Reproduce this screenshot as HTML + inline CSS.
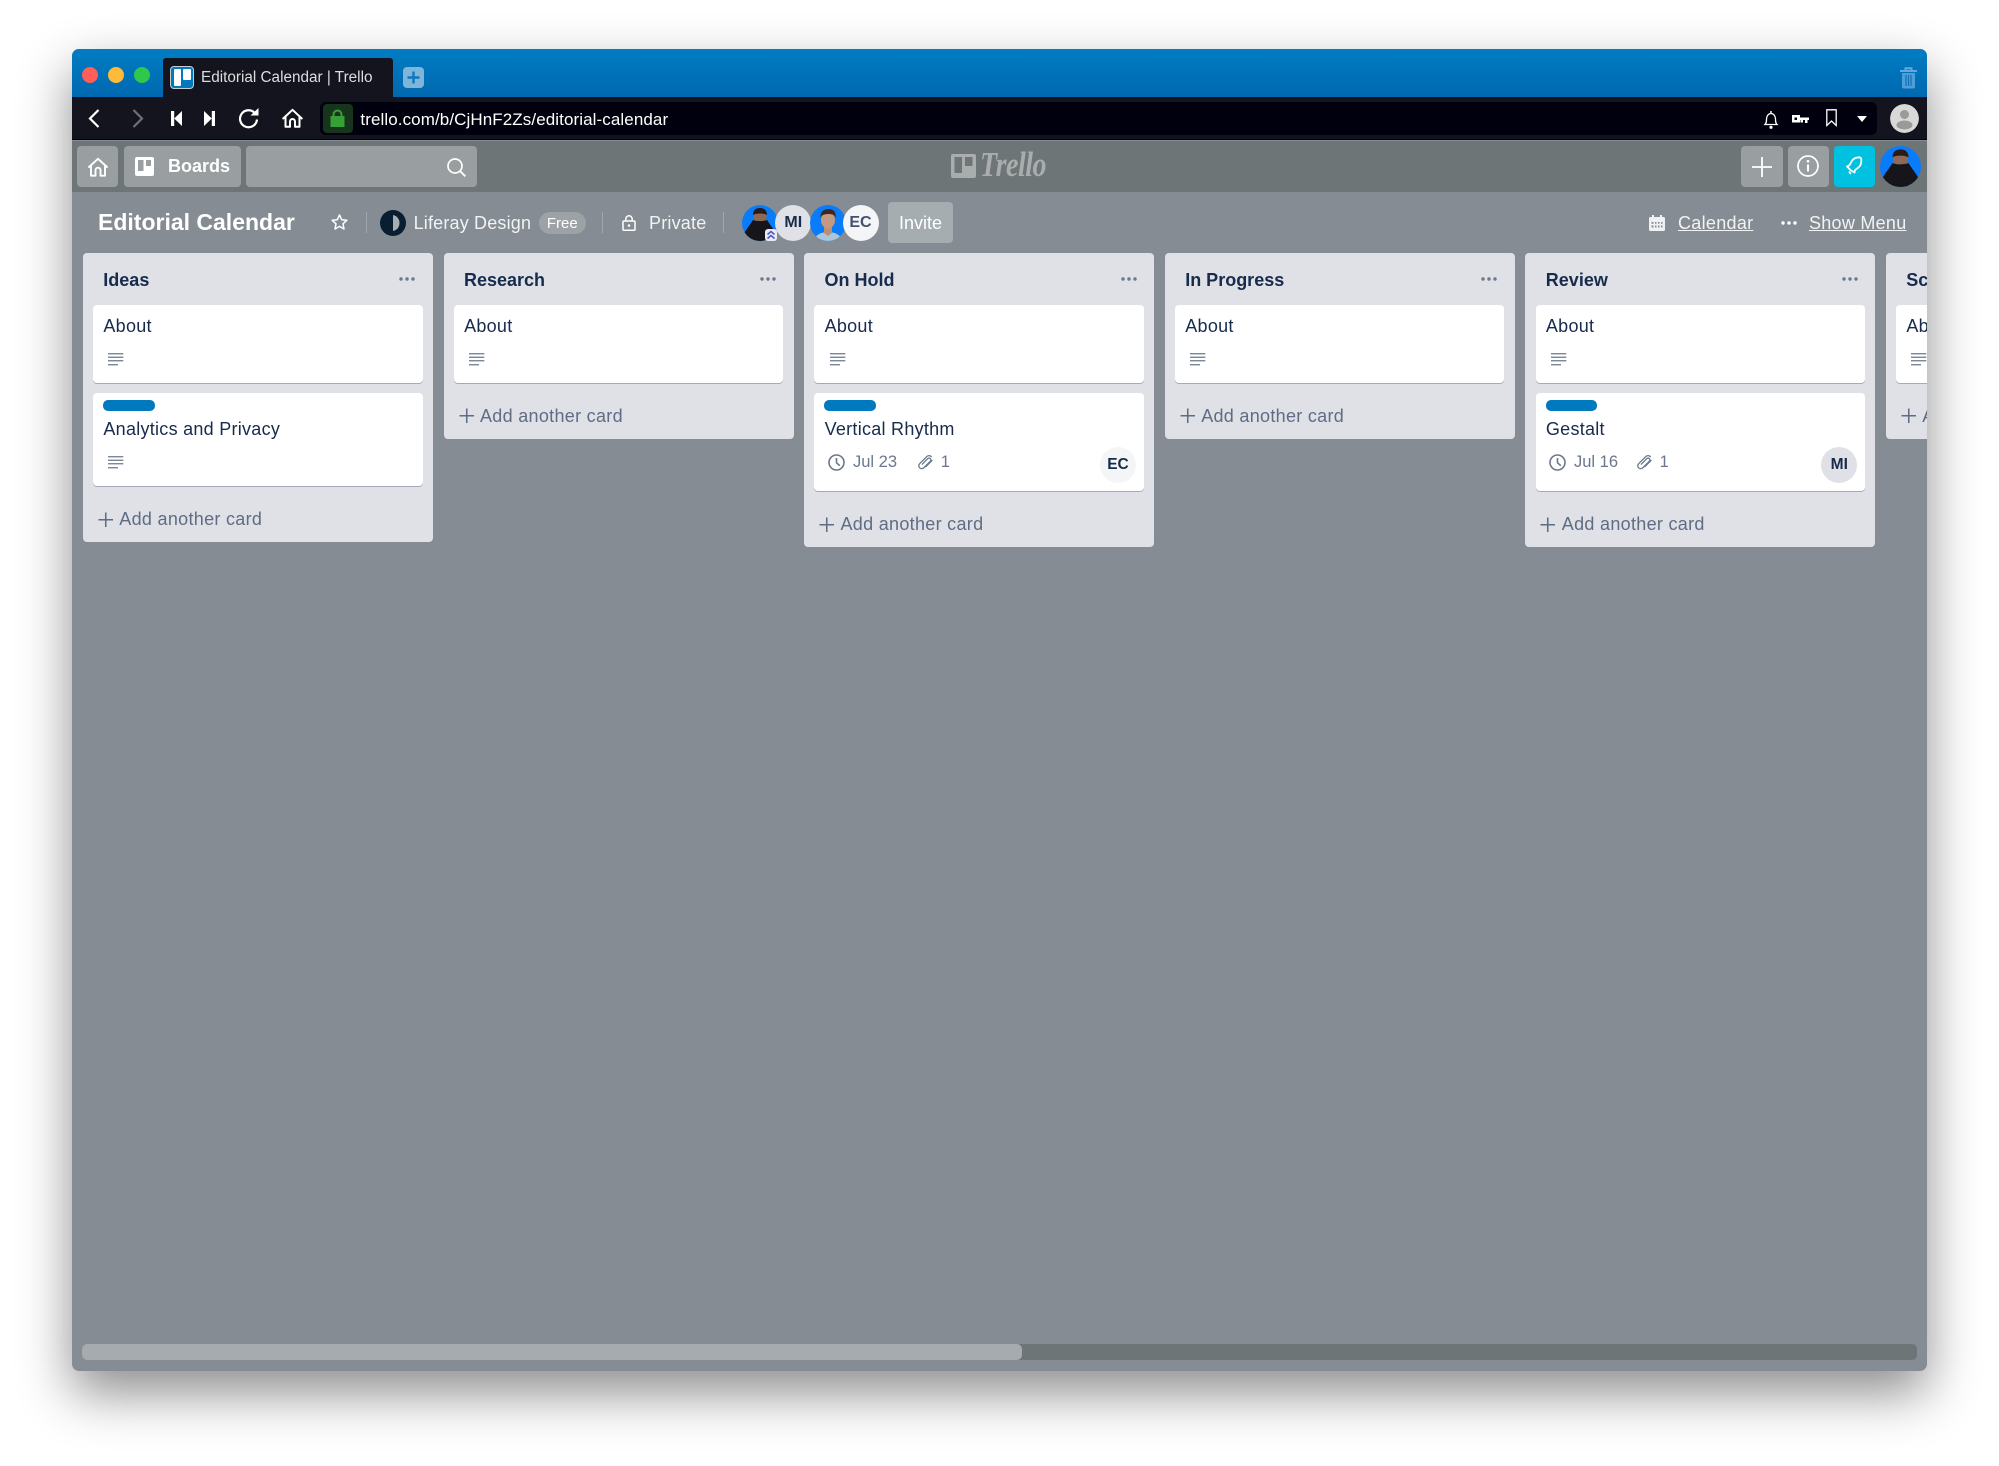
<!DOCTYPE html>
<html lang="en">
<head>
<meta charset="utf-8">
<title>Editorial Calendar | Trello</title>
<style>
*{box-sizing:border-box;margin:0;padding:0}
html,body{width:1999px;height:1466px;background:#fff;overflow:hidden;font-family:"Liberation Sans",sans-serif}
#win{position:absolute;left:72px;top:49px;width:1855px;height:1322px;border-radius:7px;box-shadow:0 22px 52px rgba(0,0,0,.45);}
#wclip{position:absolute;left:0;top:0;width:1855px;height:1322px;border-radius:7px;overflow:hidden;background:#858c93}
#in{position:absolute;left:-72px;top:-49px;width:1px;height:1px}
.a{position:absolute}
.t{position:absolute;white-space:nowrap}
.hb{position:absolute;top:146px;height:41px;border-radius:4px;background:#999fa1}
svg{position:absolute;overflow:visible;display:block}
.l{position:absolute;top:253.3px;width:350px;background:#dfe1e6;border-radius:4px}
.lt{position:absolute;left:20.5px;top:14.7px;line-height:24px;font-size:18px;font-weight:700;color:#172b4d;white-space:nowrap}
.c{position:absolute;left:10.3px;width:329.5px;background:#fff;border-radius:4px;box-shadow:0 1px 0 rgba(9,30,66,.28)}
.ct{position:absolute;left:10.3px;line-height:24px;font-size:18px;letter-spacing:.27px;color:#172b4d;white-space:nowrap}
.lb{position:absolute;left:10px;top:7.3px;width:51.7px;height:10.4px;border-radius:5px;background:#0079bf}
.add{position:absolute;left:36.5px;line-height:24px;font-size:18px;letter-spacing:.3px;color:#5e6c84;white-space:nowrap}
.m{position:absolute;font-size:16.5px;line-height:20px;color:#6b778c;white-space:nowrap}
.mav{position:absolute;top:53.7px;width:36px;height:36px;border-radius:50%;text-align:center;line-height:36px;font-size:15.5px;font-weight:700;color:#172b4d}
.av{position:absolute;top:204.7px;width:36px;height:36px;border-radius:50%;text-align:center;line-height:36px;font-size:16px;font-weight:700}
.sep{position:absolute;top:212px;width:1px;height:21px;background:rgba(255,255,255,.24)}
.bt{position:absolute;white-space:nowrap;color:#f2f3f4;font-size:18px;line-height:24px;top:210.7px}
</style>
</head>
<body>
<svg width="0" height="0" style="position:absolute">
<defs>
<symbol id="desc" viewBox="0 0 15.4 13"><g stroke="#6b778c" stroke-width="1.25" fill="none"><path d="M0 .7H15.4M0 4.2H15.4M0 7.7H15.4M0 11.8H10"/></g></symbol>
<symbol id="plus" viewBox="0 0 16 16"><path d="M8 .5V15.5M.5 8H15.5" stroke="#5e6c84" stroke-width="1.6" fill="none"/></symbol>
<symbol id="dots" viewBox="0 0 16 4"><circle cx="2" cy="2" r="1.7" fill="#6b778c"/><circle cx="8" cy="2" r="1.7" fill="#6b778c"/><circle cx="14" cy="2" r="1.7" fill="#6b778c"/></symbol>
<symbol id="clock" viewBox="0 0 17 17"><circle cx="8.5" cy="8.5" r="7.5" fill="none" stroke="#6b778c" stroke-width="1.6"/><path d="M8.5 4V8.8L11.8 11.6" fill="none" stroke="#6b778c" stroke-width="1.6"/></symbol>
<symbol id="a1" viewBox="0 0 36 36"><rect width="36" height="36" fill="#0a7cfa"/><ellipse cx="18" cy="12" rx="6.5" ry="7.5" fill="#8c6a57"/><path d="M11 10c0-5 3-7 7-7s7 2 7 7c-3-2-11-2-14 0z" fill="#2b1b16"/><path d="M0 36V32C3 26 7 21 11 15c4 1.5 10 1.5 14 0 4 6 8 11 11 17v4z" fill="#15151a"/></symbol>
<symbol id="a3" viewBox="0 0 36 36"><rect width="36" height="36" fill="#0a7cfa"/><path d="M4 36c1-6 7-9 14-9s13 3 14 9z" fill="#a9c6dc"/><path d="M14 20h8v8l-4 3-4-3z" fill="#b98f78"/><ellipse cx="18" cy="15" rx="7" ry="8.5" fill="#c39a80"/><path d="M10.5 13c-.5-6 3-9 8-9s8 3 7 9c-1-3-3-4-7-4s-7 1-8 4z" fill="#3c2a22"/></symbol>
</defs>
</svg>

<div id="win"><div id="wclip"><div id="in">

<!-- tab bar -->
<div class="a" style="left:72px;top:49px;width:1855px;height:48px;background:linear-gradient(#007dc3,#0068b0)"></div>
<div class="a" style="left:82px;top:66.7px;width:16px;height:16px;border-radius:50%;background:#ff5f5b"></div>
<div class="a" style="left:107.7px;top:66.7px;width:16px;height:16px;border-radius:50%;background:#febb3a"></div>
<div class="a" style="left:133.7px;top:66.7px;width:16px;height:16px;border-radius:50%;background:#2fc84a"></div>
<div class="a" style="left:162.5px;top:58px;width:230px;height:39px;background:#14141e;border-radius:3px 3px 0 0"></div>
<div class="a" style="left:170px;top:65.7px;width:23.5px;height:23.5px;border-radius:4px;background:#0079bf;border:1.5px solid #c6ccd2"></div>
<div class="a" style="left:173.5px;top:69px;width:7.5px;height:16.5px;background:#fff;border-radius:1px"></div>
<div class="a" style="left:183px;top:69px;width:7.5px;height:10.5px;background:#fff;border-radius:1px"></div>
<div class="t" style="left:201px;top:68px;line-height:20px;font-size:15.3px;color:#dcdde0">Editorial Calendar | Trello</div>
<div class="a" style="left:403px;top:66.7px;width:21px;height:21px;border-radius:4px;background:#80b5da"></div>
<svg style="left:403px;top:66.7px" width="21" height="21"><path d="M10.5 4.5V16.5M4.5 10.5H16.5" stroke="#0f78bd" stroke-width="2.4"/></svg>
<svg style="left:1900px;top:66.7px" width="17" height="22" viewBox="0 0 17 22"><path d="M0 4H17M5.5 3.5V1.2H11.5V3.5" stroke="#62a9dc" stroke-width="2" fill="none"/><path d="M2 6H15V19.5a2 2 0 0 1-2 2H4a2 2 0 0 1-2-2z" fill="#4f9ed8"/><path d="M6 8V19M8.5 8V19M11 8V19" stroke="#0f70b6" stroke-width="1.2"/></svg>

<!-- toolbar -->
<div class="a" style="left:72px;top:97px;width:1855px;height:43px;background:#14141e;border-bottom:1.5px solid #000"></div>
<div class="a" style="left:320px;top:102px;width:1557px;height:33px;background:#00000e;border-radius:6px"></div>
<svg style="left:87.7px;top:109px" width="12" height="19" viewBox="0 0 12 19"><path d="M10.5 1 2 9.5 10.5 18" fill="none" stroke="#fff" stroke-width="2.2"/></svg>
<svg style="left:132px;top:109px" width="12" height="19" viewBox="0 0 12 19"><path d="M1.5 1 10 9.5 1.5 18" fill="none" stroke="#6f7074" stroke-width="2.2"/></svg>
<svg style="left:171px;top:111px" width="11" height="15" viewBox="0 0 11 15"><path d="M0 0H3.2V15H0zM11 0V15L3.2 7.5z" fill="#fff"/></svg>
<svg style="left:204px;top:111px" width="11" height="15" viewBox="0 0 11 15"><path d="M11 0H7.8V15H11zM0 0V15L7.8 7.5z" fill="#fff"/></svg>
<svg style="left:238px;top:108px" width="21" height="20" viewBox="0 0 21 20"><path d="M16.8 5A8.5 8.5 0 1 0 19 11.5" fill="none" stroke="#fff" stroke-width="2.2"/><path d="M12.5 7.5H20.5V0z" fill="#fff"/></svg>
<svg style="left:282px;top:108px" width="21" height="20" viewBox="0 0 21 20"><path d="M1.2 10.5 10.5 1.8 19.8 10.5M3.5 8.500V18.8H8V13.5a2.500 2.500 0 0 1 5 0V18.8H17.5V8.500" fill="none" stroke="#fff" stroke-width="2" stroke-linejoin="round" stroke-linecap="round"/></svg>
<div class="a" style="left:322.5px;top:104px;width:30px;height:28.7px;background:#17351c;border-radius:4px"></div>
<svg style="left:330px;top:109px" width="15" height="18" viewBox="0 0 15 18"><path d="M3.5 8V5.5a4 4 0 0 1 8 0V8" fill="none" stroke="#36a036" stroke-width="2"/><rect x="0.5" y="7" width="14" height="11" fill="#36a036"/></svg>
<div class="t" style="left:360.4px;top:108.5px;line-height:21px;font-size:17px;letter-spacing:.09px;color:#fff">trello.com/b/CjHnF2Zs/editorial-calendar</div>
<svg style="left:1763.500px;top:110.5px" width="14" height="18" viewBox="0 0 14 18"><path d="M1 13.5c1.500-1.500 1.500-3 1.500-5.500 0-3 2-5.500 4.500-5.500S11.500 5 11.500 8c0 2.500 0 4 1.500 5.500z" fill="none" stroke="#fff" stroke-width="1.3"/><path d="M7 0V2" stroke="#fff" stroke-width="1.5"/><circle cx="7" cy="16.3" r="1.6" fill="#fff"/></svg>
<svg style="left:1792px;top:115px" width="17" height="9" viewBox="0 0 17 9"><path d="M0 0H8V2.500H17V5H15.500V8H13V5H11V7.500H8.500V5H8V7.500H0zM2.500 2.500V5H5V2.500z" fill="#fff" fill-rule="evenodd"/></svg>
<svg style="left:1826px;top:109px" width="11" height="18" viewBox="0 0 11 18"><path d="M.8.8H10.2V16.500L5.500 12 .8 16.500z" fill="none" stroke="#fff" stroke-width="1.3"/></svg>
<svg style="left:1857px;top:116px" width="10" height="6" viewBox="0 0 10 6"><path d="M0 0H10L5 6z" fill="#fff"/></svg>
<svg style="left:1890px;top:104px;border-radius:50%;overflow:hidden" width="29" height="29" viewBox="0 0 29 29"><circle cx="14.5" cy="14.5" r="14.5" fill="#d8d8d8"/><circle cx="14.5" cy="10.5" r="4.5" fill="#9a9a9a"/><ellipse cx="14.5" cy="21" rx="8" ry="4.5" fill="#9a9a9a"/></svg>

<!-- trello header -->
<div class="a" style="left:72px;top:140.5px;width:1855px;height:51.5px;background:#6d7577"></div>
<div class="hb" style="left:77px;width:41px"></div>
<svg style="left:88px;top:157px" width="20" height="20" viewBox="0 0 20 20"><path d="M1 10 10 1.800 19 10M3 8.500V18.700H7.500V13.200a2.500 2.500 0 0 1 5 0V18.700H17V8.500" fill="none" stroke="#fff" stroke-width="1.9" stroke-linejoin="round" stroke-linecap="round"/></svg>
<div class="hb" style="left:124px;width:116.7px"></div>
<svg style="left:135px;top:156.7px" width="19" height="19" viewBox="0 0 19 19"><path fill-rule="evenodd" d="M2 0H17a2 2 0 0 1 2 2V17a2 2 0 0 1-2 2H2a2 2 0 0 1-2-2V2a2 2 0 0 1 2-2zM3 3V14H8.500V3zM11 3V9H16V3z" fill="#fff"/></svg>
<div class="t" style="left:168px;top:154px;line-height:24px;font-size:18px;font-weight:700;color:#fff">Boards</div>
<div class="hb" style="left:246px;width:231.4px"></div>
<svg style="left:446.5px;top:157.5px" width="19" height="19" viewBox="0 0 19 19"><circle cx="8" cy="8" r="7" fill="none" stroke="#fff" stroke-width="1.7"/><path d="M13 13 18.3 18.3" stroke="#fff" stroke-width="1.9"/></svg>
<svg style="left:951px;top:154px" width="25" height="24" viewBox="0 0 25 24"><path fill-rule="evenodd" d="M2 0H23a2 2 0 0 1 2 2V22a2 2 0 0 1-2 2H2a2 2 0 0 1-2-2V2a2 2 0 0 1 2-2zM3.500 3V19H11V3zM14 3V12H21.500V3z" fill="#a9adae"/></svg>
<div class="t" style="left:980px;top:147px;line-height:36px;font-family:'Liberation Serif',serif;font-style:italic;font-weight:700;font-size:35px;color:#a9adae;letter-spacing:-.6px;transform-origin:left center;transform:scaleX(.8)">Trello</div>
<div class="hb" style="left:1741px;width:41.5px"></div>
<svg style="left:1752px;top:156.5px" width="20" height="20" viewBox="0 0 20 20"><path d="M10 0V20M0 10H20" stroke="#fff" stroke-width="1.8"/></svg>
<div class="hb" style="left:1788px;width:41px"></div>
<svg style="left:1796.5px;top:155.2px" width="22" height="22" viewBox="0 0 22 22"><circle cx="11" cy="11" r="10" fill="none" stroke="#fff" stroke-width="1.7"/><circle cx="11" cy="6.2" r="1.3" fill="#fff"/><path d="M11 9.500V16.500" stroke="#fff" stroke-width="2"/></svg>
<div class="hb" style="left:1833.6px;width:41.4px;background:#00c2e0"></div>
<svg style="left:1845.5px;top:156px" width="18" height="20" viewBox="0 0 18 20"><path d="M5 14.500 1 10.500c2-.5 3-1.500 4-4 1.200-3 4-5 8-5.200 1 0 2 .7 2.300 1.700.3 3.500-.5 7-3.500 9-2 1.300-3.500 2-3.200 4.500zM3 15.500 4.800 18" fill="none" stroke="#fff" stroke-width="1.8" stroke-linejoin="round"/></svg>
<svg style="left:1880px;top:146px;border-radius:50%;overflow:hidden" width="41" height="41" viewBox="0 0 36 36"><use href="#a1" width="36" height="36"/></svg>

<!-- board header -->
<div class="t" style="left:98px;top:208px;line-height:29px;font-size:23px;font-weight:700;color:#fff">Editorial Calendar</div>
<svg style="left:331px;top:214px" width="17" height="16" viewBox="0 0 17 16"><path d="M8.500 1 10.700 5.700 15.800 6.300 12 9.800 13 15 8.500 12.400 4 15 5 9.800 1.200 6.300 6.300 5.700z" fill="none" stroke="#fff" stroke-width="1.5" stroke-linejoin="round"/></svg>
<div class="sep" style="left:366px"></div>
<svg style="left:380px;top:210px" width="26" height="26" viewBox="0 0 26 26"><circle cx="13" cy="13" r="13" fill="#091e30"/><path d="M13 5c4.500 1 6.500 4.500 6.500 8S17.500 20 13 21z" fill="#a9aeb2"/></svg>
<div class="bt" style="left:413.6px;letter-spacing:.18px">Liferay Design</div>
<div class="a" style="left:538.6px;top:212px;width:47.4px;height:22px;border-radius:11px;background:#9ca2a6"></div>
<div class="t" style="left:538.6px;top:212px;width:47.4px;text-align:center;line-height:23px;font-size:15px;color:#fff">Free</div>
<div class="sep" style="left:602px"></div>
<svg style="left:621.6px;top:215px" width="14" height="16" viewBox="0 0 14 16"><rect x="1" y="6" width="12" height="9.200" rx="1" fill="none" stroke="#fff" stroke-width="1.5"/><path d="M3.800 6V4a3.200 3.200 0 0 1 6.400 0V6" fill="none" stroke="#fff" stroke-width="1.5"/><circle cx="7" cy="10.500" r="1.3" fill="#fff"/></svg>
<div class="bt" style="left:649px;letter-spacing:.2px">Private</div>
<div class="sep" style="left:723px"></div>
<svg style="left:742px;top:204.7px;border-radius:50%;overflow:hidden" width="36" height="36" viewBox="0 0 36 36"><use href="#a1" width="36" height="36"/></svg>
<div class="av" style="left:775.3px;background:#dfe1e6;color:#172b4d">MI</div>
<svg style="left:765px;top:229px" width="12" height="12" viewBox="0 0 12 12"><rect width="12" height="12" rx="3" fill="#e8ebf3"/><path d="M2.500 5.500 6 2.500 9.500 5.500M2.500 9.500 6 6.500 9.500 9.500" fill="none" stroke="#4a55c8" stroke-width="1.5"/></svg>
<svg style="left:809.5px;top:204.7px;border-radius:50%;overflow:hidden" width="36" height="36" viewBox="0 0 36 36"><use href="#a3" width="36" height="36"/></svg>
<div class="av" style="left:842.5px;background:#f4f5f7;color:#42526e">EC</div>
<div class="a" style="left:888.3px;top:202.3px;width:64.4px;height:41px;border-radius:4px;background:#a6adb0"></div>
<div class="t" style="left:888.3px;top:210.8px;width:64.4px;text-align:center;line-height:24px;font-size:18px;color:#fff">Invite</div>
<svg style="left:1649px;top:215px" width="16" height="16" viewBox="0 0 16 16"><path fill-rule="evenodd" d="M3 0H5V2H11V0H13V2H14.500A1.500 1.500 0 0 1 16 3.500V14.500A1.500 1.500 0 0 1 14.500 16H1.500A1.500 1.500 0 0 1 0 14.500V3.500A1.500 1.500 0 0 1 1.500 2H3zM2.500 7V8.800H4.500V7zM6 7V8.800H7.500V7zM9 7V8.800H10.500V7zM12 7V8.800H13.500V7zM2.500 10.500V12.500H4.500V10.500zM6 10.500V12.500H7.500V10.500zM9 10.500V12.500H10.500V10.500zM12 10.500V12.500H13.500V10.500z" fill="#f0f1f2"/></svg>
<div class="bt" style="left:1678px;text-decoration:underline;letter-spacing:.3px">Calendar</div>
<svg style="left:1780.5px;top:221px" width="16" height="4" viewBox="0 0 16 4"><circle cx="2" cy="2" r="1.7" fill="#fff"/><circle cx="8" cy="2" r="1.7" fill="#fff"/><circle cx="14" cy="2" r="1.7" fill="#fff"/></svg>
<div class="bt" style="left:1809px;text-decoration:underline;letter-spacing:.27px">Show Menu</div>

<!-- list 1 -->
<div class="l" style="left:82.8px;height:288.4px">
  <div class="lt">Ideas</div>
  <svg style="left:316.5px;top:24px" width="16" height="4"><use href="#dots" width="16" height="4"/></svg>
  <div class="c" style="top:52px;height:77.7px"><div class="ct" style="top:8.7px">About</div><svg style="left:15.3px;top:47.7px" width="15.4" height="13"><use href="#desc" width="15.4" height="13"/></svg></div>
  <div class="c" style="top:139.7px;height:92.7px"><div class="lb"></div><div class="ct" style="top:24px">Analytics and Privacy</div><svg style="left:15.3px;top:63px" width="15.4" height="13"><use href="#desc" width="15.4" height="13"/></svg></div>
  <svg style="left:15.2px;top:258.5px" width="15.5" height="15.5"><use href="#plus" width="15.5" height="15.5"/></svg>
  <div class="add" style="top:254px">Add another card</div>
</div>

<!-- list 2 -->
<div class="l" style="left:443.5px;height:185.7px">
  <div class="lt">Research</div>
  <svg style="left:316.5px;top:24px" width="16" height="4"><use href="#dots" width="16" height="4"/></svg>
  <div class="c" style="top:52px;height:77.7px"><div class="ct" style="top:8.7px">About</div><svg style="left:15.3px;top:47.7px" width="15.4" height="13"><use href="#desc" width="15.4" height="13"/></svg></div>
  <svg style="left:15.2px;top:155px" width="15.5" height="15.5"><use href="#plus" width="15.5" height="15.5"/></svg>
  <div class="add" style="top:150.7px">Add another card</div>
</div>

<!-- list 3 -->
<div class="l" style="left:804px;height:294px">
  <div class="lt">On Hold</div>
  <svg style="left:316.5px;top:24px" width="16" height="4"><use href="#dots" width="16" height="4"/></svg>
  <div class="c" style="top:52px;height:77.7px"><div class="ct" style="top:8.7px">About</div><svg style="left:15.3px;top:47.7px" width="15.4" height="13"><use href="#desc" width="15.4" height="13"/></svg></div>
  <div class="c" style="top:139.7px;height:98px"><div class="lb"></div><div class="ct" style="top:24px">Vertical Rhythm</div>
    <svg style="left:13.9px;top:60.8px" width="17" height="17"><use href="#clock" width="17" height="17"/></svg>
    <div class="m" style="left:38.7px;top:59.3px">Jul 23</div>
    <svg style="left:103.7px;top:62px" width="15" height="15" viewBox="0 0 15 15"><path d="M13.4 1.7c-1.500-1.500-3.500-1.300-4.900.1L2 8.300c-1.600 1.600-1.500 3.400-.4 4.500 1.200 1.200 3 1.200 4.500-.3l6-6c1-1 1-2.200.2-2.900-.8-.8-1.900-.7-2.900.3L4.300 9.200M14 5.500 8 11.600" fill="none" stroke="#6b778c" stroke-width="1.3" stroke-linecap="round"/></svg>
    <div class="m" style="left:126.5px;top:59.3px">1</div>
    <div class="mav" style="left:285.7px;background:#f4f5f7">EC</div>
  </div>
  <svg style="left:15.2px;top:263.5px" width="15.5" height="15.5"><use href="#plus" width="15.5" height="15.5"/></svg>
  <div class="add" style="top:259px">Add another card</div>
</div>

<!-- list 4 -->
<div class="l" style="left:1164.7px;height:185.7px">
  <div class="lt">In Progress</div>
  <svg style="left:316.5px;top:24px" width="16" height="4"><use href="#dots" width="16" height="4"/></svg>
  <div class="c" style="top:52px;height:77.7px"><div class="ct" style="top:8.7px">About</div><svg style="left:15.3px;top:47.7px" width="15.4" height="13"><use href="#desc" width="15.4" height="13"/></svg></div>
  <svg style="left:15.2px;top:155px" width="15.5" height="15.5"><use href="#plus" width="15.5" height="15.5"/></svg>
  <div class="add" style="top:150.7px">Add another card</div>
</div>

<!-- list 5 -->
<div class="l" style="left:1525.3px;height:294px">
  <div class="lt">Review</div>
  <svg style="left:316.5px;top:24px" width="16" height="4"><use href="#dots" width="16" height="4"/></svg>
  <div class="c" style="top:52px;height:77.7px"><div class="ct" style="top:8.7px">About</div><svg style="left:15.3px;top:47.7px" width="15.4" height="13"><use href="#desc" width="15.4" height="13"/></svg></div>
  <div class="c" style="top:139.7px;height:98px"><div class="lb"></div><div class="ct" style="top:24px">Gestalt</div>
    <svg style="left:13.9px;top:60.8px" width="17" height="17"><use href="#clock" width="17" height="17"/></svg>
    <div class="m" style="left:38.4px;top:59.3px">Jul 16</div>
    <svg style="left:101.4px;top:62px" width="15" height="15" viewBox="0 0 15 15"><path d="M13.4 1.7c-1.500-1.500-3.500-1.300-4.900.1L2 8.300c-1.600 1.600-1.500 3.400-.4 4.500 1.200 1.200 3 1.200 4.500-.3l6-6c1-1 1-2.200.2-2.900-.8-.8-1.900-.7-2.900.3L4.300 9.200M14 5.500 8 11.600" fill="none" stroke="#6b778c" stroke-width="1.3" stroke-linecap="round"/></svg>
    <div class="m" style="left:124px;top:59.3px">1</div>
    <div class="mav" style="left:285.7px;background:#dfe1e6">MI</div>
  </div>
  <svg style="left:15.2px;top:263.5px" width="15.5" height="15.5"><use href="#plus" width="15.5" height="15.5"/></svg>
  <div class="add" style="top:259px">Add another card</div>
</div>

<!-- list 6 -->
<div class="l" style="left:1885.8px;height:185.7px">
  <div class="lt">Scheduled</div>
  <div class="c" style="top:52px;height:77.7px"><div class="ct" style="top:8.7px">About</div><svg style="left:15.3px;top:47.7px" width="15.4" height="13"><use href="#desc" width="15.4" height="13"/></svg></div>
  <svg style="left:15.2px;top:155px" width="15.5" height="15.5"><use href="#plus" width="15.5" height="15.5"/></svg>
  <div class="add" style="top:150.7px">Add another card</div>
</div>

<!-- scrollbar -->
<div class="a" style="left:82.3px;top:1344.3px;width:1834.5px;height:15.7px;border-radius:5px;background:#6d7577"></div>
<div class="a" style="left:82.3px;top:1344.3px;width:940px;height:15.7px;border-radius:5px;background:#a6abaf"></div>

</div></div></div>
</body>
</html>
